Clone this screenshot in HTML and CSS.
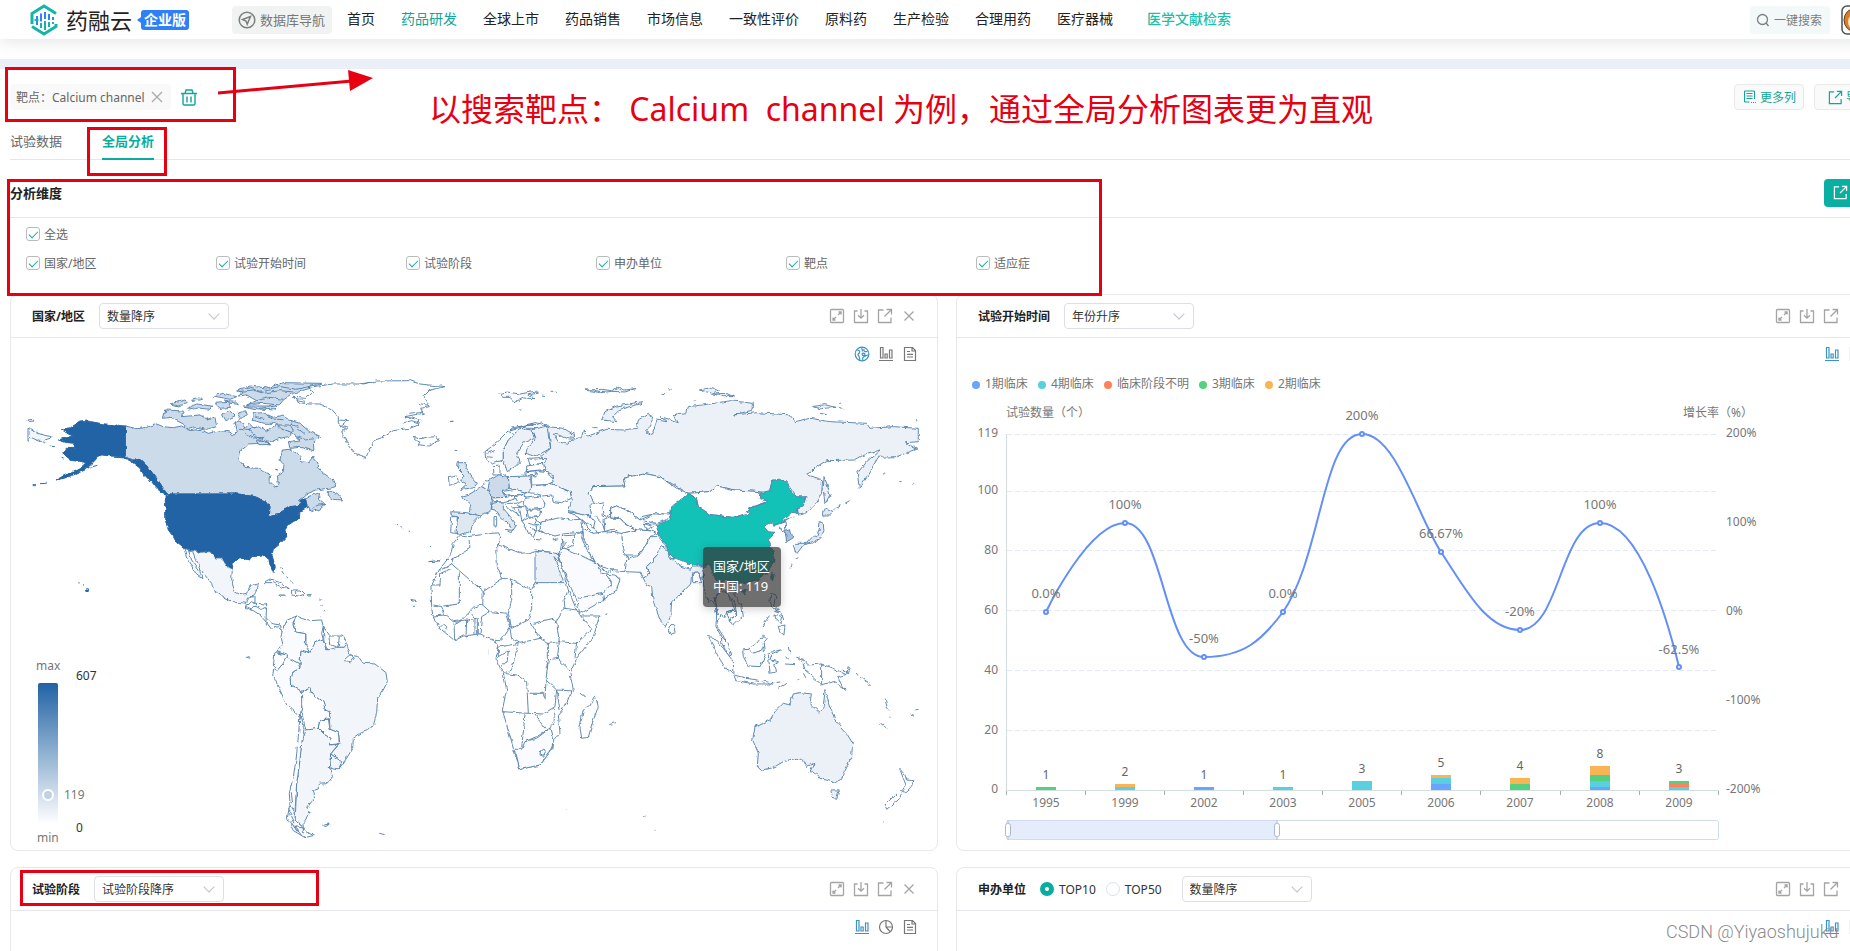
FILE: index.html
```html
<!DOCTYPE html>
<html lang="zh-CN">
<head>
    <meta charset="UTF-8">
    <meta name="viewport" content="width=device-width, initial-scale=1.0">
    <title>药融云 - 全局分析</title>
    <link rel="stylesheet" href="styles.css">
</head>
<body>
    <!-- icon set -->
    <svg class="sprite" aria-hidden="true">
        <symbol id="i-full" viewBox="0 0 16 16"><rect x="1.5" y="1.5" width="13" height="13" rx="1"/><path d="M9.5 4h2.6v2.6M12 4 9 7M4 9.500v2.500h2.500M4 12l3-3"/></symbol>
        <symbol id="i-down" viewBox="0 0 16 16"><path d="M4.500 3H1.500v11.500h13V3h-3M8 1v9M5 7.200l3 3 3-3"/></symbol>
        <symbol id="i-share" viewBox="0 0 16 16"><path d="M6.500 2h-5v12.500h12.500v-5M9.500 1.500h5v5M14.300 1.700 7.500 8.500"/></symbol>
        <symbol id="i-close" viewBox="0 0 16 16"><path d="m3.500 3.500 9 9M12.500 3.500l-9 9"/></symbol>
        <symbol id="i-bar" viewBox="0 0 16 16"><path d="M1 14.500h14M2.500 1.500h2.500V12H2.500zM7 8h2.200v4H7zM11.500 4H14v8h-2.500z"/></symbol>
        <symbol id="i-doc" viewBox="0 0 16 16"><path d="M2.500 1.500h8l3 3v10h-11zM10 1.500v3.500h3.500M5 5.500h3M5 8.300h6M5 11h6"/></symbol>
        <symbol id="i-globe" viewBox="0 0 16 16"><circle cx="8" cy="8" r="6.800"/><path d="M3 4c2 0 3 1 2.500 2.500S3 8 4.500 9.500 5 12 6 14M8 1.500C7 3 9.500 4 8 5.500M9 14c-1-2 0-3 1.500-3.500S12 9 14.500 9M10 3c-1 2 1 3 3.500 2.500M8 8c1-1.500 3-1 3 .5S8.500 10 8 8z"/></symbol>
        <symbol id="i-pie" viewBox="0 0 16 16"><circle cx="8" cy="8" r="6.500"/><path d="M8 1.500V8h6.500M8 8l4 4.500"/></symbol>
    </svg>

    <div class="page">
        <header class="topbar">
            <a class="logo" href="#">
                <svg width="28" height="32" viewBox="0 0 28 32" fill="none">
                    <path d="M2 20V9.500L14 2l12 7.500M2 22.500 14 30l12-7.500V20" stroke="#12b5a6" stroke-width="3"/>
                    <path d="M7 12v9M11 9.500v8M15 8v7M19 10v6M23 13v3" stroke="#2e86f5" stroke-width="2"/>
                    <path d="M4.500 16h4M11 19v5M15 17v9M19 18v5M23 18v2" stroke="#12b5a6" stroke-width="2"/>
                </svg>
                <span class="logo-name">药融云</span>
                <span class="logo-badge">企业版</span>
            </a>
            <button class="db-nav" type="button">
                <svg width="18" height="18" viewBox="0 0 18 18" fill="none" stroke="#7b7f7e" stroke-width="1.500"><circle cx="9" cy="9" r="7.800"/><path d="m12.500 5.500-8 3 3.500 1.500 1.200 3.300z"/></svg>
                数据库导航
            </button>
            <nav class="menu">
                <a href="#">首页</a>
                <a href="#" class="on">药品研发</a>
                <a href="#">全球上市</a>
                <a href="#">药品销售</a>
                <a href="#">市场信息</a>
                <a href="#">一致性评价</a>
                <a href="#">原料药</a>
                <a href="#">生产检验</a>
                <a href="#">合理用药</a>
                <a href="#">医疗器械</a>
                <a href="#" class="lit">医学文献检索</a>
            </nav>
            <button class="quick" type="button">
                <svg width="14" height="14" viewBox="0 0 14 14" fill="none" stroke="#7b7f7e" stroke-width="1.300"><circle cx="6.500" cy="6.500" r="5"/><path d="m10 10 2.500 3"/></svg>
                一键搜索
            </button>
            <a class="avatar" href="#" aria-label="account">
                <svg width="30" height="30" viewBox="0 0 30 30"><rect x="1" y="1" width="28" height="28" rx="5" fill="#fff" stroke="#4b5152" stroke-width="1.500"/><circle cx="15" cy="15" r="12" fill="#d97f28" stroke="#6d3d1a"/><circle cx="16" cy="17" r="9" fill="#f7e4c8"/></svg>
            </a>
        </header>

        <div class="band"></div>

        <main class="content">
            <div class="toolbar">
                <span class="tag">靶点：Calcium channel
                    <button type="button" aria-label="remove"><svg width="12" height="12" viewBox="0 0 12 12" fill="none" stroke="#aaa" stroke-width="1.300"><path d="m1 1 10 10M11 1 1 11"/></svg></button>
                </span>
                <button class="trash" type="button" aria-label="clear">
                    <svg width="16" height="17" viewBox="0 0 16 17" fill="none" stroke="#12a598" stroke-width="1.400"><path d="M0 4.500h16M4 4.500 5 1h6l1 3.500M2 4.500V15l1 1h10l1-1V4.500M6 7.500v6M10 7.500v6"/></svg>
                </button>
                <span class="space"></span>
                <button class="btn" type="button">
                    <svg width="13" height="14" viewBox="0 0 13 14" fill="none" stroke="#12a598"><path d="M11.500 9V1h-10v11h5M3.500 3.500h6M3.500 6h6M3.500 8.500h6M8 12.500h1M10 12.500h1M12 12.500h1"/></svg>
                    更多列
                </button>
                <button class="btn export" type="button">
                    <svg class="ico" width="15" height="15"><use href="#i-share"/></svg>
                    导出
                </button>
            </div>

            <div class="tabs">
                <a href="#">试验数据</a>
                <a href="#" class="active">全局分析</a>
            </div>

            <div class="dim-head">
                <h2>分析维度</h2>
                <button type="button" aria-label="导出"><svg class="ico" width="15" height="15"><use href="#i-share"/></svg></button>
            </div>
            <div class="dims">
                <div class="dim-row"><label><input type="checkbox" checked>全选</label></div>
                <div class="dim-row">
                    <label><input type="checkbox" checked>国家/地区</label>
                    <label><input type="checkbox" checked>试验开始时间</label>
                    <label><input type="checkbox" checked>试验阶段</label>
                    <label><input type="checkbox" checked>申办单位</label>
                    <label><input type="checkbox" checked>靶点</label>
                    <label><input type="checkbox" checked>适应症</label>
                </div>
            </div>

            <div class="cards">
                <!-- map -->
                <section class="card">
                    <div class="card-head">
                        <h3>国家/地区</h3>
                        <span class="select"><select aria-label="国家/地区排序"><option>数量降序</option></select></span>
                        <div class="acts">
                            <button type="button" aria-label="fullscreen"><svg class="ico"><use href="#i-full"/></svg></button>
                            <button type="button" aria-label="download"><svg class="ico"><use href="#i-down"/></svg></button>
                            <button type="button" aria-label="share"><svg class="ico"><use href="#i-share"/></svg></button>
                            <button type="button" aria-label="close"><svg class="ico"><use href="#i-close"/></svg></button>
                        </div>
                    </div>
                    <div class="card-body">
                        <div class="views">
                            <button type="button" class="sel" aria-label="map"><svg class="ico"><use href="#i-globe"/></svg></button>
                            <button type="button" aria-label="bar"><svg class="ico"><use href="#i-bar"/></svg></button>
                            <button type="button" aria-label="table"><svg class="ico"><use href="#i-doc"/></svg></button>
                        </div>
                        <svg class="chart" viewBox="11 338 926 512">
                            <defs>
                                <linearGradient id="ramp" x1="0" y1="0" x2="0" y2="1"><stop offset="0" stop-color="#2163a4"/><stop offset="1" stop-color="#fff"/></linearGradient>
                                <filter id="coast" x="-5%" y="-5%" width="110%" height="110%" color-interpolation-filters="sRGB"><feTurbulence type="fractalNoise" baseFrequency="0.18" numOctaves="2" seed="4"/><feDisplacementMap in="SourceGraphic" scale="4" xChannelSelector="R" yChannelSelector="G"/></filter>
                            </defs>
                            <g class="land" filter="url(#coast)">
                                <!-- americas -->
                                <g transform="translate(0 360) scale(.3333)">
                                    <path class="c1" d="M376 198 410 206 440 202 470 192 490 200 520 203 545 198 570 212 600 208 625 220 660 212 690 216 700 225 712 212 705 190 720 180 735 205 750 190 770 210 760 225 775 240 800 240 812 255 780 250 745 252 722 270 717 300 735 322 775 325 790 335 812 345 810 365 828 382 835 372 832 345 850 335 852 315 840 300 848 270 870 268 890 280 900 290 903 305 925 308 940 290 950 312 968 338 1000 360 1008 380 985 385 950 390 920 402 895 422 930 408 960 398 955 415 975 432 948 450 930 452 922 440 917 418 903 420 895 437 870 440 850 452 830 464 808 470 810 440 800 425 765 410 715 402 510 402 490 385 475 362 458 340 440 318 420 298 400 300 376 289z"/>
                                    <path class="c1" d="M710 90 750 78 800 84 850 68 965 70 930 85 880 100 850 120 838 135 790 130 740 135 770 122 740 105 715 108 730 98zM730 138h100l-5 12-60-4zM490 175 497 150 550 153 545 170 600 165 625 180 645 172 650 200 620 208 590 202 565 208 550 192 510 172zM757 180 760 160 790 158 820 172 850 165 865 180 900 190 925 212 962 230 940 245 942 272 900 262 870 265 865 245 900 240 870 215 840 205 825 190 790 190zM510 132l45-12 10 10-30 8zM560 145l30-13 45 6-5 10-35-4-30 6zM640 108l30-8 40 10-20 8zM575 118l25-8 8 8-25 6zM645 130l40-3 10 15-35 3zM670 120l35 4 10 10-30-6zM665 165l25-12 15 15-30 14zM712 160l25-8 5 12-20 12zM745 208l30-8 25 15 30-20 40 0 10 15-15 20-25 5-30 10-35-12zM770 240l25 2 15 12-30 0zM985 392 1012 400 1028 420 1000 418 985 410zM928 450l20-12 25-6-15 15-20 8z"/>
                                    <path class="line" d="M715 95 760 90 790 100 840 92 880 96M740 82l40 12 60-14 50 8 60-14M770 122l40-10 40 6M780 145l40-6M765 168l25 8M800 165l20 12 30 2M870 188l20 12 25 20M890 230l30 10 20-4M720 205l30 4 20-8M735 222l25 12 30-2M700 195l15-10"/>
                                    <path class="us" d="M376 198 340 194 300 190 262 183 240 186 222 196 208 206 184 211 208 222 222 228 200 232 175 240 200 248 222 250 224 262 205 263 188 278 200 290 215 302 240 304 258 308 240 325 215 338 190 348 168 360 195 354 225 343 255 330 275 312 290 295 305 285 330 288 376 291 400 302 420 298 440 318 458 340 475 362 490 385 506 402 495 406 470 385 455 365 435 350 420 325 395 305 376 295z"/>
                                    <path class="us" d="M510 402H715L765 410 800 425 810 440 808 470 830 464 850 452 870 440 895 437 903 420 917 418 922 442 900 455 898 475 880 485 865 495 855 510 860 530 840 552 820 568 816 585 826 620 822 638 812 625 806 595 790 588 755 590 750 600 720 593 700 605 697 628 683 622 670 597 650 597 630 575 600 577 552 566 530 548 520 530 505 510 497 485 497 440 495 410zM260 686l9 2-2 8-7-2zM246 674l6 4M235 667l4 2M145 257l22 4M185 292l6 2M98 374l10 0M120 371l20-1M272 322l20-6M438 352l12 14M826 328l8 2"/>
                                    <path class="c3" d="M552 566 600 577 630 575 650 597 670 597 683 622 697 628 695 660 705 695 720 704 740 700 750 678 775 672 772 690 760 708 745 712 740 730 725 728 700 728 670 712 640 690 635 670 610 640 590 605 578 575 566 572 575 600 600 635 606 656 590 645 575 618 563 600z"/>
                                    <path class="c3" d="M84 205 120 222 158 232 135 240 138 250 110 240 92 232 84 242zM84 180l14-2 4 5-16 2z"/>
                                    <path class="line" d="M740 730 736 742 760 752 780 765 800 788 815 808 835 800 848 808M745 712 765 710V730L800 732 798 785M755 748 765 738 785 748 800 740M736 742 755 725 765 730M800 775 815 790 840 795 846 805"/>
                                    <path d="M790 668 810 657 840 668 868 686 845 682 820 668zM875 690 900 690 912 702 895 708 875 705zM890 690v18M840 705l12 0 0 4-10 0zM922 704l12 0 0 4-10 0zM838 620l10 4M845 632l6 10M856 650l8 6M868 662l12 8M962 716l2 4M966 735l2 6M970 755l8 0M962 770l4 4M740 888l14 4M1190 495l4 2M1204 503l6 2M1226 510l6 2M1232 718l18 4M1236 736l8 0M1285 605l32-2M1290 560l4 2"/>
                                    <path class="c4" d="M848 808 862 780 890 768 878 790 885 815 918 822 916 850 930 878 903 872 900 912 870 902 860 885 830 875 848 850 843 830z"/>
                                    <path d="M890 768 910 776 930 782 965 780 970 800 965 820 970 840 945 848 942 870 930 878 918 860 918 822 885 815 880 790z"/>
                                    <path d="M970 800 990 828 1030 828 1042 850 1030 862 1010 862 985 872 972 845zM990 828 992 855 1010 862M1018 830 1015 860"/>
                                    <path class="c3" d="M903 870 930 878 945 848 970 840 980 870 1010 862 1030 862 1040 848 1050 885 1075 890 1090 910 1125 912 1158 938 1162 965 1150 990 1133 1015 1130 1060 1122 1090 1108 1110 1085 1118 1060 1135 1058 1165 1040 1195 1020 1222 1018 1200 992 1182 1020 1150 1015 1118 990 1108 988 1070 975 1050 970 1025 935 1000 930 983 905 995 875 975 873 955 880 935 900 925z"/>
                                    <path d="M825 878 860 885 855 905 832 932 820 918zM1032 900l16-14 12 8-8 12-16-4z"/>
                                    <path class="c4" d="M860 890 895 910 900 925 880 935 873 955 875 975 905 995 908 1030 900 1068 860 1035 840 990 818 945 822 925 832 932 850 910z"/>
                                    <path d="M905 995 930 983 935 1000 970 1025 975 1050 988 1055 990 1078 960 1080 955 1105 918 1112 908 1070 905 1030zM955 1105 960 1080 985 1076 990 1108 1015 1118 1018 1150 990 1155 993 1135 975 1125z"/>
                                    <path class="c3" d="M918 1110 955 1105 975 1125 993 1135 990 1155 1015 1153 992 1182 988 1225 998 1250 985 1268 955 1270 955 1290 940 1295 945 1310 935 1325 920 1345 930 1360 915 1385 905 1395 885 1380 888 1330 890 1270 900 1200 905 1150zM992 1182 1025 1205 1015 1230 990 1225z"/>
                                    <path class="c4" d="M900 1066 912 1108 905 1150 900 1200 890 1270 886 1340 885 1380 905 1395 912 1410 940 1427 915 1433 880 1412 862 1375 870 1330 868 1300 880 1250 888 1200 895 1130zM868 1360l14 30M870 1330l12 24M872 1385l20 30M880 1395l24 30M910 1395v25M866 1345l10 20M874 1300l4 30M885 1400l30 5M968 1396l20-4-10 8zM1138 1420l16 4"/>
                                    <path d="M880 112 920 115 940 95 925 82 1000 72 1090 72 1130 63 1230 62 1260 72 1335 80 1290 90 1270 110 1288 140 1262 145 1270 160 1240 165 1215 170 1260 180 1255 195 1230 205 1180 212 1150 232 1125 240 1110 265 1098 292 1065 280 1040 245 1025 215 1035 205 1015 190 1015 170 995 148 960 132 930 132 900 128z"/>
                                    <path class="line" d="M1080 72l40-6M1015 180l28 2-20 14 20 6-16 14M1205 190l30-8 20 6M1228 160l40-6M1255 130l30 6M925 82l15 14M885 118l30 6"/>
                                    <path d="M1242 240 1238 232 1262 236 1280 232 1310 230 1318 242 1285 258 1255 254 1260 246zM1350 185l10-1M1364 271l8 1M1408 290l2 4"/>
                                </g>
                                <!-- europe, africa, asia, oceania -->
                                <g transform="translate(420 360) scale(.3333)">
                                    <path class="c2" d="M385 200 430 205 465 225 450 238 415 225 400 222 415 245 440 252 455 238 485 232 490 210 505 228 560 208 610 210 650 205 655 180 685 160 700 180 680 215 695 225 712 180 740 185 720 170 775 188 760 165 780 160 800 158 805 140 870 132 930 122 1000 130 1000 150 940 165 1010 158 1110 165 1125 185 1170 175 1230 185 1340 190 1350 205 1420 200 1495 205V245L1460 248 1490 268 1430 290 1375 292 1340 350 1318 385 1312 340 1340 305 1380 270 1340 280 1305 300 1220 302 1190 320 1163 345 1195 355 1208 360 1205 400 1180 440 1150 462 1135 465 1133 445 1158 412 1130 410 1100 365 1060 360 1045 400 1020 395 945 390 890 378 870 395 805 400 720 350 670 340 610 355 615 378 520 380 505 400 525 425 510 440 515 468 485 465 445 450 458 415 450 395 395 372 400 345 365 330 370 300 362 290 392 265z"/>
                                    <path class="c2" d="M545 180 555 155 590 138 668 125 660 132 600 148 578 170 590 185zM1212 350 1222 375 1230 405 1215 432 1210 390zM838 90l30-6 30 8-20 8zM880 102l40-2 20 10-30 0zM1175 140l40-6 30 8-40 4zM1250 142l20 4M495 90l50-2 30 4 20-10 20 8 30-4-30 10-40-2-30 4zM365 105l12 2M392 94l16 0M725 100l10 1M745 86l10 2M300 150h4M92 184l8 0M1260 128l6 2M1488 182l6 2M820 122l4 2M1200 160l20 4M520 203l10 0"/>
                                    <path class="c4" d="M240 100 260 96 300 102 350 93 355 100 325 104 345 116 310 114 285 128 270 112 248 112z"/>
                                    <path d="M505 400 520 380 615 378 610 355 670 340 720 350 770 385 805 400 790 425 760 440 755 462 700 462 665 470 660 480 630 455 590 438 572 445V475L550 465 545 440 552 425 525 430z"/>
                                    <path d="M805 400 870 395 890 378 945 390 1020 395 1018 415 1045 425 1000 440 980 460 940 472 870 463 835 440 830 415z"/>
                                    <path d="M552 478 570 470 600 475 615 490 650 510 600 522 580 508 555 515zM572 475V445L590 438 630 455 660 480 700 462 755 462 740 480 705 492 670 490 680 512 650 510 615 490 600 475zM525 470 545 490 558 520 535 522 520 500 515 468M670 490l30 10-20 8 25 10M690 470l-20 12 40 8"/>
                                    <path class="c4" d="M360 515 362 488 385 480 420 473 450 480 485 478 490 515 430 522 405 528z"/>
                                    <path d="M445 455 515 470 525 485 520 505 500 490 485 478zM485 478 500 500 520 520M490 505 520 520 555 515 605 520 610 560 625 600 615 635 580 632 560 625 530 612 500 570 485 530zM427 528 465 525 490 515 490 535 505 565 525 605 490 590 430 565z"/>
                                    <path class="c4" d="M415 590 422 565 435 565 490 590 530 610 545 640 580 645 600 655 590 690 550 720 480 762 470 720 440 655z"/>
                                    <path class="line" d="M475 715 550 700 575 670 560 645M550 700 555 722M428 528 422 565M440 540 430 565M465 525 460 555 440 565M425 580 412 590M530 612 565 640 580 625"/>
                                    <path d="M605 520 650 510 690 512 710 520 690 530 680 555 655 585 615 585 608 550z"/>
                                    <path class="c4" d="M620 600 655 588 680 555 690 530 715 530 740 560 720 565 710 590 680 620 690 640 670 655 660 637 615 635z"/>
                                    <path class="c2" d="M725 560 742 575 755 597 812 618 848 618 855 635 845 660 830 635 815 640 812 672 780 705 755 725 752 770 735 802 720 780 700 725 695 680 680 675 670 655 690 640 680 620 710 590 715 570z"/>
                                    <path d="M755 597 765 590 818 612 812 628 780 618zM818 640 835 640 845 668 818 668zM752 792 762 800 766 820 755 825 748 810z"/>
                                    <path class="cn" d="M805 400 828 415 835 440 868 463 935 473 985 463 990 445 1045 425 1018 412 1022 398 1050 392 1055 362 1080 357 1100 368 1112 395 1133 412 1158 410 1150 438 1133 443 1132 462 1095 485 1062 497 1058 485 1033 502 1045 515 1067 517 1045 540 1060 575 1062 600 1045 635 1010 660 980 668 975 672 950 668 925 660 905 665 885 660 875 625 850 618 805 610 760 592 742 575 740 555 720 530 708 495 750 480 755 440 775 425zM1055 638 1063 640 1058 665 1050 655zM965 692 982 688 975 705z"/>
                                    <path d="M850 620 870 615 885 655 903 672 905 695 885 708 890 740 892 765 882 730 875 720 865 725 850 680zM905 695 925 700 935 725 945 750 920 755 915 775 900 760 892 800 910 830 925 850 915 850 888 800 890 765 885 708zM925 660 945 690 940 705 965 735 970 770 940 798 928 780 950 765 945 730 925 700 905 690M920 755 945 750 950 765 928 780z"/>
                                    <path class="c4" d="M905 830 925 850 935 885 922 880 905 850zM968 870 985 868 1010 850 1030 825 1042 835 1030 850 1035 890 1020 920 985 918 970 890zM985 868 1000 880 1025 870 1032 850"/>
                                    <path d="M865 830 880 832 910 865 940 905 942 942 920 930 895 890zM942 945 980 955 1040 965 1060 972 1000 972 950 962zM1045 880 1060 875 1085 870 1055 885 1050 900 1075 905 1060 912 1070 935 1050 940 1048 915zM1070 968l14-2M1075 985l26-18M1105 860l4 20M1100 890l6 8M1095 912l30 2M1130 962l8-4M1150 940l8 14"/>
                                    <path d="M1052 700 1068 705 1062 735 1075 750 1060 745 1050 725zM1075 800 1095 795 1092 825 1080 815zM1065 762l20 8-4 18-14-14zM1025 800l25-35M1085 760l6 20M1062 750l20 6"/>
                                    <path d="M1130 892 1150 898 1165 915 1205 912 1250 930 1280 945 1285 920 1290 925 1285 942 1255 950 1262 970 1275 988 1240 965 1205 975 1185 955 1155 930 1150 910zM1205 912V975M1305 940l10 6M1320 952l20 14M1340 962l12 18M1265 930l20 10M1395 1015l6 22M1400 1040l8 10M1380 1088l22 18M1472 1062l10 4M1485 1050l8-2M1410 1070v6"/>
                                    <path class="k" d="M1095 512 1112 506 1118 535 1100 545z"/>
                                    <path d="M1062 497 1095 485 1098 512 1085 515 1078 500M1085 485l30-25 20 4"/>
                                    <path class="c1" d="M1120 560 1130 550 1160 550 1180 528 1190 530 1198 510 1200 485 1210 490 1212 512 1202 535 1180 548 1150 555 1130 582zM1208 455 1215 442 1240 455 1225 468 1208 468z" fill-opacity=".6"/>
                                    <path class="line" d="M1242 448l20-14M1275 430l14-8M1110 625l8-16M1125 600l6-8M1438 364l8 2M1390 342l6 1M1476 372h4"/>
                                    <path class="c2" d="M1120 1002 1140 998 1175 1002 1170 1030 1200 1060 1210 1040 1215 992 1230 1035 1245 1080 1280 1120 1298 1150 1295 1190 1270 1240 1265 1258 1240 1268 1200 1255 1190 1240 1170 1235 1182 1210 1160 1220 1150 1200 1130 1195 1090 1205 1065 1220 1025 1232 1012 1220 1015 1180 998 1140 1005 1100 1050 1080 1065 1055 1090 1030 1110 1035zM1232 1290 1258 1290 1250 1315 1238 1312z"/>
                                    <path d="M1440 1228 1455 1245 1460 1260 1482 1262 1470 1285 1455 1298 1448 1290 1458 1275 1450 1255zM1440 1290 1450 1295 1435 1320 1400 1348 1395 1335 1420 1310zM1390 1386h4M668 1370l14 3M704 1410h4M438 1348h4M568 1094l20-6M555 762l6 1"/>
                                    <!-- europe -->
                                    <path class="c1" fill-opacity=".7" d="M115 308 140 308 138 325 150 345 172 370 160 384 122 388 140 372 122 362 132 345 112 325z"/>
                                    <path d="M85 350 110 345 115 368 88 376zM220 320 240 318 240 345 222 345zM247 340l8 6"/>
                                    <path class="c4" d="M195 275 240 240 275 205 345 188 385 195 375 210 335 205 300 205 265 240 250 270 250 300 215 312 198 300z"/>
                                    <path class="c2" d="M250 300 250 270 265 240 300 205 335 210 345 235 310 250 290 280 300 305 285 320 262 335zM335 210 380 198 392 265 345 290 318 280 322 262 345 240z"/>
                                    <path class="line" d="M270 210 340 192M290 200l70-8M200 280l25-8M198 290l20 2M265 215l20 6M360 185l20 14"/>
                                    <path d="M325 298 380 295 375 310 330 315zM320 318 370 310 375 328 320 335zM318 335 350 332 348 348 318 345zM335 350 350 332 385 335 400 365 380 375 335 375z"/>
                                    <path class="c4" d="M335 378 395 372 450 395 455 415 425 428 400 425 395 405 370 408 345 400 325 398zM315 415 360 408 375 430 372 445 325 448 310 430z"/>
                                    <path class="c1" d="M203 365 235 345 265 350 268 385 248 395 258 412 220 414 203 395z"/>
                                    <path class="c2" d="M265 350 330 348 335 385 320 398 268 385z"/>
                                    <path class="c1" fill-opacity=".75" d="M128 408 150 402 185 380 210 395 215 410 210 455 180 465 148 458 152 435 130 415z"/>
                                    <path class="c1" fill-opacity=".65" d="M92 455 140 458 182 468 160 490 150 515 118 525 108 520 112 470 95 468zM215 430 250 425 250 445 275 475 290 495 278 512 268 495 240 470 225 450 212 448zM255 510h20l-2 10z"/>
                                    <path d="M95 470 112 470 108 520 92 518zM185 378 200 360 208 368 203 392zM222 470h8v28h-8zM248 395 285 388 320 398 300 408 258 405zM220 414 258 412 285 405 285 418 250 425 215 425zM285 410 315 402 318 418 295 430zM255 430 290 430 300 440 275 440 298 468 270 450zM298 440 318 440 320 470 305 480zM322 450 362 450 358 470 325 472zM305 482 325 475 355 472 345 490 350 505 340 530 325 520 318 500zM325 490l30 8M330 505l40 10M345 478l20 14M345 538l20 2M398 540l12-4"/>
                                    <!-- africa -->
                                    <path d="M118 528 140 530 235 518 242 530 235 555 300 580 330 578 345 570 400 578 412 582 425 620 445 690 470 750 482 768 540 768 520 830 470 895 450 940 460 990 430 1045 415 1065 420 1120 400 1140 395 1170 360 1215 300 1228 285 1180 265 1110 247 1050 260 990 250 940 228 900 235 860 220 838 180 822 130 828 104 842 60 805 38 765 35 740 33 680 60 625 90 590 100 550z"/>
                                    <path class="c2" d="M345 572 400 578 412 582 418 608 402 590 432 668H345z"/>
                                    <path class="c4" d="M285 1168 305 1168 315 1145 350 1135 390 1105 400 1145 390 1175 360 1215 300 1228zM362 1175l10-8 6 10-8 12-10-4z"/>
                                    <path class="line" d="M147 540 150 565 95 600V612L65 628M95 612 190 695 248 655 232 620 230 555M248 655 275 660 335 690 345 668M35 675H60L62 640 95 625M118 640V732L70 738M190 695 188 735 165 740 150 755 120 785M335 690V745L325 780 275 805 265 760 275 720 275 660M180 822 185 770 210 755 260 760 272 800 245 840 225 838M270 805 275 835 300 850 360 835 330 785M340 790 400 775 410 790 418 845 385 850 360 835M405 790 435 745 470 750M445 690 432 720 435 745M418 845 470 850 515 808 482 768M470 850 465 895M385 850V900L378 960 410 990 405 1040 370 1062 325 1060 320 965 290 945 250 940M247 1055 325 1060M315 1065 305 1165M315 1145 350 1130 390 1105 403 1080 400 1045M385 900 412 895 450 930M418 845 412 895M410 990 460 993M235 862 295 850 275 930 250 940M235 862V890L268 870 265 900 245 920M40 735 65 740 75 765 40 768M75 765 100 785 140 780 170 775M140 780 138 830M165 775V822M172 775V822M104 842 102 790M60 805 68 790 80 800 75 815M345 1065 375 1105M325 1000 370 1000 375 1015 378 960M410 990 420 1050M375 900 382 915 378 925M120 785 105 790M188 735 210 755M150 755 165 775"/>
                                    <path d="M525 1005 535 1040 520 1080 505 1132 485 1135 480 1100 490 1050 510 1035zM480 1000l14 10M22 605l36-3M30 560l4 2M208 868v16"/>
                                </g>
                            </g>
                            <!-- visual map -->
                            <rect x="38" y="683" width="20" height="141" rx="2" fill="url(#ramp)"/>
                            <circle cx="48" cy="795" r="5" fill="#bfd1e4" stroke="#fff" stroke-width="2"/>
                            <g class="t12">
                                <text x="36" y="670">max</text>
                                <text x="37" y="842">min</text>
                                <text x="64" y="799">119</text>
                                <text class="dark" x="76" y="680">607</text>
                                <text class="dark" x="76" y="832">0</text>
                            </g>
                        </svg>
                        <div class="tip">国家/地区<br>中国: 119</div>
                    </div>
                </section>

                <!-- trend -->
                <section class="card">
                    <div class="card-head">
                        <h3>试验开始时间</h3>
                        <span class="select"><select aria-label="试验开始时间排序"><option>年份升序</option></select></span>
                        <div class="acts">
                            <button type="button" aria-label="fullscreen"><svg class="ico"><use href="#i-full"/></svg></button>
                            <button type="button" aria-label="download"><svg class="ico"><use href="#i-down"/></svg></button>
                            <button type="button" aria-label="share"><svg class="ico"><use href="#i-share"/></svg></button>
                            <button type="button" aria-label="close"><svg class="ico"><use href="#i-close"/></svg></button>
                        </div>
                    </div>
                    <div class="card-body">
                        <div class="views">
                            <button type="button" class="sel" aria-label="bar"><svg class="ico"><use href="#i-bar"/></svg></button>
                            <button type="button" aria-label="table"><svg class="ico"><use href="#i-doc"/></svg></button>
                        </div>
                        <svg class="chart" viewBox="957 338 926 512">
                            <g class="t12">
                                <circle class="b1" cx="976" cy="385" r="4"/><text x="985" y="388">1期临床</text>
                                <circle class="b4" cx="1042" cy="385" r="4"/><text x="1051" y="388">4期临床</text>
                                <circle class="b0" cx="1108" cy="385" r="4"/><text x="1117" y="388">临床阶段不明</text>
                                <circle class="b3" cx="1203" cy="385" r="4"/><text x="1212" y="388">3期临床</text>
                                <circle class="b2" cx="1269" cy="385" r="4"/><text x="1278" y="388">2期临床</text>
                                <text x="1006" y="417">试验数量（个）</text>
                                <text x="1683" y="417">增长率（%）</text>
                            </g>
                            <path class="grid" d="M1007 434.500H1719M1007 491.500H1719M1007 550.500H1719M1007 610.500H1719M1007 670.500H1719M1007 730.500H1719"/>
                            <path class="axis" d="M1006.500 434V790.500H1719"/>
                            <path class="tick" d="M1006.500 791v4M1085.500 791v4M1164.500 791v4M1243.500 791v4M1322.500 791v4M1401.500 791v4M1480.500 791v4M1560.500 791v4M1639.500 791v4M1718.500 791v4"/>
                            <g class="t12 end">
                                <text x="998" y="437">119</text><text x="998" y="494">100</text><text x="998" y="554">80</text><text x="998" y="614">60</text><text x="998" y="674">40</text><text x="998" y="734">20</text><text x="998" y="793">0</text>
                            </g>
                            <g class="t12">
                                <text x="1726" y="437">200%</text><text x="1726" y="526">100%</text><text x="1726" y="615">0%</text><text x="1726" y="704">-100%</text><text x="1726" y="793">-200%</text>
                            </g>
                            <g class="t12 mid">
                                <text x="1046" y="807">1995</text><text x="1125" y="807">1999</text><text x="1204" y="807">2002</text><text x="1283" y="807">2003</text><text x="1362" y="807">2005</text><text x="1441" y="807">2006</text><text x="1520" y="807">2007</text><text x="1600" y="807">2008</text><text x="1679" y="807">2009</text>
                            </g>
                            <!-- stacked bars, 3px per trial -->
                            <rect class="b3" x="1036" y="787" width="20" height="3"/>
                            <rect class="b4" x="1115" y="787" width="20" height="3"/><rect class="b2" x="1115" y="784" width="20" height="3"/>
                            <rect class="b1" x="1194" y="787" width="20" height="3"/>
                            <rect class="b4" x="1273" y="787" width="20" height="3"/>
                            <rect class="b4" x="1352" y="781" width="20" height="9"/>
                            <rect class="b1" x="1431" y="784" width="20" height="6"/><rect class="b4" x="1431" y="778" width="20" height="6"/><rect class="b2" x="1431" y="775" width="20" height="3"/>
                            <rect class="b3" x="1510" y="784" width="20" height="6"/><rect class="b2" x="1510" y="778" width="20" height="6"/>
                            <rect class="b1" x="1590" y="787" width="20" height="3"/><rect class="b4" x="1590" y="781" width="20" height="6"/><rect class="b3" x="1590" y="775" width="20" height="6"/><rect class="b2" x="1590" y="766" width="20" height="9"/>
                            <rect class="b4" x="1669" y="787" width="20" height="3"/><rect class="b0" x="1669" y="784" width="20" height="3"/><rect class="b3" x="1669" y="781" width="20" height="3"/>
                            <g class="t12 mid dim">
                                <text x="1046" y="779">1</text><text x="1125" y="776">2</text><text x="1204" y="779">1</text><text x="1283" y="779">1</text><text x="1362" y="773">3</text><text x="1441" y="767">5</text><text x="1520" y="770">4</text><text x="1600" y="758">8</text><text x="1679" y="773">3</text>
                            </g>
                            <path class="rate" d="M1046 612C1046 612 1088 523 1125 523C1164 523 1164 657 1204 657C1244 657 1262 640 1283 612C1322 556 1322 434 1362 434C1396 434 1417 515 1441 552C1465 588 1486 630 1520 630C1560 630 1560 523 1600 523C1640 523 1668 622 1679 667"/>
                            <g class="dots">
                                <circle cx="1046" cy="612" r="2"/><circle cx="1125" cy="523" r="2"/><circle cx="1204" cy="657" r="2"/><circle cx="1283" cy="612" r="2"/><circle cx="1362" cy="434" r="2"/><circle cx="1441" cy="552" r="2"/><circle cx="1520" cy="630" r="2"/><circle cx="1600" cy="523" r="2"/><circle cx="1679" cy="667" r="2"/>
                            </g>
                            <g class="t13 mid">
                                <text x="1046" y="598">0.0%</text><text x="1125" y="509">100%</text><text x="1204" y="643">-50%</text><text x="1283" y="598">0.0%</text><text x="1362" y="420">200%</text><text x="1441" y="538">66.67%</text><text x="1520" y="616">-20%</text><text x="1600" y="509">100%</text><text x="1679" y="654">-62.5%</text>
                            </g>
                            <!-- zoom slider -->
                            <rect x="1006.500" y="820.500" width="712" height="19" rx="2" fill="none" stroke="#d2dbee"/>
                            <rect x="1008" y="821" width="269" height="18" fill="#e5ecfc"/>
                            <path d="M1008 820v20M1277 820v20" stroke="#acb8d1" fill="none"/>
                            <rect x="1005.500" y="823.500" width="5" height="13" rx="2" fill="#fff" stroke="#acb8d1"/>
                            <rect x="1274.500" y="823.500" width="5" height="13" rx="2" fill="#fff" stroke="#acb8d1"/>
                        </svg>
                    </div>
                </section>

                <section class="card">
                    <div class="card-head">
                        <h3>试验阶段</h3>
                        <span class="select"><select aria-label="试验阶段排序"><option>试验阶段降序</option></select></span>
                        <div class="acts">
                            <button type="button" aria-label="fullscreen"><svg class="ico"><use href="#i-full"/></svg></button>
                            <button type="button" aria-label="download"><svg class="ico"><use href="#i-down"/></svg></button>
                            <button type="button" aria-label="share"><svg class="ico"><use href="#i-share"/></svg></button>
                            <button type="button" aria-label="close"><svg class="ico"><use href="#i-close"/></svg></button>
                        </div>
                    </div>
                    <div class="card-body tall">
                        <div class="views">
                            <button type="button" class="sel" aria-label="bar"><svg class="ico"><use href="#i-bar"/></svg></button>
                            <button type="button" aria-label="pie"><svg class="ico"><use href="#i-pie"/></svg></button>
                            <button type="button" aria-label="table"><svg class="ico"><use href="#i-doc"/></svg></button>
                        </div>
                    </div>
                </section>

                <section class="card">
                    <div class="card-head">
                        <h3>申办单位</h3>
                        <div class="radios">
                            <label><input type="radio" name="top" checked>TOP10</label>
                            <label><input type="radio" name="top">TOP50</label>
                        </div>
                        <span class="select"><select aria-label="申办单位排序"><option>数量降序</option></select></span>
                        <div class="acts">
                            <button type="button" aria-label="fullscreen"><svg class="ico"><use href="#i-full"/></svg></button>
                            <button type="button" aria-label="download"><svg class="ico"><use href="#i-down"/></svg></button>
                            <button type="button" aria-label="share"><svg class="ico"><use href="#i-share"/></svg></button>
                            <button type="button" aria-label="close"><svg class="ico"><use href="#i-close"/></svg></button>
                        </div>
                    </div>
                    <div class="card-body tall">
                        <div class="views">
                            <button type="button" class="sel" aria-label="bar"><svg class="ico"><use href="#i-bar"/></svg></button>
                            <button type="button" aria-label="table"><svg class="ico"><use href="#i-doc"/></svg></button>
                        </div>
                    </div>
                </section>
            </div>
        </main>

        <!-- red notes -->
        <div class="mark mark-tag"></div>
        <div class="mark mark-tab"></div>
        <div class="mark mark-dims"></div>
        <div class="mark mark-phase"></div>
        <svg class="arrow" width="156" height="26" viewBox="0 0 156 26"><path d="M0 24 134 12" stroke="#e60012" stroke-width="3"/><path d="m130 1 25 8-23 13z" fill="#e60012"/></svg>
        <p class="note">以搜索靶点：&nbsp;Calcium&nbsp; channel 为例，通过全局分析图表更为直观</p>
        <div class="watermark">CSDN @Yiyaoshujuku</div>
    </div>
</body>
</html>
```
FILE: styles.css
```css
* {
    box-sizing: border-box;
}

body {
    margin: 0;
    background: #fff;
    color: #666;
    font-family: "Noto Sans", "Noto Sans CJK SC", sans-serif;
    font-size: 12px;
    overflow: hidden;
}

a {
    color: inherit;
    text-decoration: none;
}

h2, h3, p {
    margin: 0;
}

button {
    display: flex;
    align-items: center;
    padding: 0;
    border: none;
    background: none;
    color: inherit;
    font: inherit;
    white-space: nowrap;
    cursor: pointer;
}

.sprite {
    display: none;
}

.ico {
    fill: none;
    stroke: currentColor;
    stroke-width: 1.3;
}

.page {
    position: relative;
    min-width: 1894px;
    height: 100vh;
    overflow: hidden;
}

/* top bar */
.topbar {
    display: flex;
    align-items: center;
    height: 39px;
    padding: 0 23px 0 30px;
    box-shadow: 0 2px 16px rgba(40, 60, 50, 0.14);
}

.logo {
    display: flex;
    align-items: center;
    width: 202px;
}

.logo-name {
    margin-left: 8px;
    color: #222;
    font-size: 22px;
    line-height: 30px;
}

.logo-badge {
    position: relative;
    margin-left: 9px;
    padding: 0 3px;
    border-radius: 3px;
    background: #2f7ff8;
    color: #fff;
    font-size: 14px;
    font-weight: bold;
    line-height: 20px;
}

.logo-badge::before {
    content: "";
    position: absolute;
    left: -4px;
    top: 7px;
    border: 3px solid transparent;
    border-left: none;
    border-right: 4px solid #2f7ff8;
}

.db-nav {
    gap: 4px;
    width: 100px;
    height: 28px;
    padding-left: 6px;
    border-radius: 4px;
    background: #f1f3f2;
    color: #777;
    font-size: 13px;
}

.menu {
    display: flex;
    flex: 1;
    gap: 26px;
    margin-left: 15px;
    padding-bottom: 2px;
    color: #222;
    font-size: 14px;
    line-height: 36px;
}

.menu .on {
    color: #12a598;
}

.menu .lit {
    margin-left: 8px;
    color: #1fc0a8;
    font-weight: 500;
}

.quick {
    gap: 4px;
    width: 80px;
    height: 28px;
    padding-left: 6px;
    border-radius: 4px;
    background: #f3f9f9;
    color: #7b7f7e;
}

.avatar {
    display: flex;
    margin-left: 11px;
}

.band {
    height: 10px;
    margin-top: 20px;
    background: #ebeff8;
}

.content {
    padding: 15px 10px 0;
}

/* search condition */
.toolbar {
    display: flex;
    align-items: center;
    height: 26px;
}

.tag {
    display: flex;
    align-items: center;
    gap: 6px;
    width: 161px;
    height: 26px;
    padding-left: 6px;
    border-radius: 4px;
    background: #f9f9f9;
    white-space: nowrap;
}

.trash {
    margin-left: 10px;
}

.space {
    flex: 1;
}

.btn {
    gap: 4px;
    width: 70px;
    height: 26px;
    padding-left: 8px;
    border: 1px solid #e9e9e9;
    border-radius: 4px;
    background: #fafafa;
    color: #12a598;
}

.export {
    gap: 3px;
    margin-left: 10px;
    padding-left: 13px;
}

.tabs {
    display: flex;
    gap: 40px;
    height: 50px;
    border-bottom: 1px solid #e6e6e6;
    font-size: 13px;
    line-height: 20px;
}

.tabs a {
    height: 50px;
    padding-top: 21px;
}

.tabs .active {
    border-bottom: 2px solid #09ac9e;
    color: #09ac9e;
    font-weight: bold;
}

.dim-head {
    display: flex;
    align-items: center;
    justify-content: space-between;
    height: 58px;
    padding-top: 8px;
    border-bottom: 1px solid #dfe9e7;
}

.dim-head h2 {
    color: #222;
    font-size: 13px;
}

.dim-head button {
    width: 60px;
    height: 28px;
    padding-left: 9px;
    border-radius: 4px;
    background: #09b0a1;
    color: #fff;
}

.dims {
    display: flex;
    flex-direction: column;
    gap: 15px;
    padding: 9px 16px 24px;
}

.dim-row {
    display: flex;
}

.dim-row label {
    display: flex;
    align-items: center;
    gap: 4px;
    width: 190px;
    height: 14px;
}

input {
    appearance: none;
    position: relative;
    flex: none;
    width: 14px;
    height: 14px;
    margin: 0;
    border: 1px solid #bbb;
    border-radius: 3px;
    background: #fff;
}

input[type="checkbox"]:checked::after {
    content: "";
    position: absolute;
    left: 4px;
    top: 1px;
    width: 4px;
    height: 8px;
    border: solid #12b0a2;
    border-width: 0 1px 1px 0;
    transform: rotate(45deg);
}

input[type="radio"] {
    border-color: #dcdfe6;
    border-radius: 50%;
}

input[type="radio"]:checked {
    border: 5px solid #09ac9e;
}

/* cards */
.cards {
    display: grid;
    grid-template-columns: 1fr 1fr;
    gap: 16px 18px;
}

.card {
    border: 1px solid #e8e8ee;
    border-radius: 8px;
    background: #fff;
}

.card-head {
    display: flex;
    align-items: center;
    height: 43px;
    padding: 0 20px 0 21px;
    border-bottom: 1px solid #e6e6ea;
}

.card-head h3 {
    color: #222;
    font-size: 12px;
}

.select {
    position: relative;
    margin-left: 14px;
}

.select select {
    appearance: none;
    display: block;
    width: 130px;
    height: 26px;
    padding: 0 7px;
    border: 1px solid #dcdfe6;
    border-radius: 4px;
    background: #fff;
    color: #333;
    font: inherit;
}

.select::after {
    content: "";
    position: absolute;
    right: 11px;
    top: 7px;
    width: 7px;
    height: 7px;
    border: solid #c0c4cc;
    border-width: 0 1px 1px 0;
    transform: rotate(45deg);
}

.radios {
    display: flex;
    gap: 10px;
    margin: 0 6px 0 14px;
    color: #333;
}

.radios label {
    display: flex;
    align-items: center;
    gap: 5px;
}

.acts {
    display: flex;
    gap: 8px;
    margin-left: auto;
    color: #a4a4a4;
}

.acts .ico, .views .ico {
    display: block;
    width: 16px;
    height: 16px;
}

.views .ico {
    stroke-width: 1.2;
}

.card-body {
    position: relative;
}

.tall {
    height: 512px;
}

.views {
    position: absolute;
    top: 8px;
    right: 19px;
    display: flex;
    gap: 8px;
    color: #777;
}

.views .sel {
    color: #3b93c4;
}

.chart {
    display: block;
    width: 100%;
}

.land {
    fill: #fff;
    stroke: #5581ae;
    stroke-width: 2.8;
    stroke-linejoin: round;
}

.land .line { fill: none; }
.land .us { fill: #2163a4; stroke: #2163a4; }
.land .c1 { fill: #cbdbea; }
.land .c2 { fill: #ecf1f8; }
.land .c3 { fill: #f2f6fa; }
.land .c4 { fill: #f9fbfe; }
.land .k { fill: #a7c2dd; }
.land .cn { fill: #12c2b6; }

.t12, .t13 {
    fill: #777;
    font-size: 12px;
}

.t13 { font-size: 13px; }
.t12 .dark { fill: #333; }
.mid { text-anchor: middle; }
.end { text-anchor: end; }
.dim { fill: #666; }

.grid {
    fill: none;
    stroke: #e1e7f3;
    stroke-dasharray: 5 3;
}

.axis {
    fill: none;
    stroke: #d3dfdf;
}

.tick {
    stroke: #aaa;
}

.b1 { fill: #6ba4fd; }
.b4 { fill: #58d0df; }
.b0 { fill: #fd8259; }
.b3 { fill: #55d080; }
.b2 { fill: #f9b555; }

.rate {
    fill: none;
    stroke: #638ff7;
    stroke-width: 2;
}

.dots {
    fill: #fff;
    stroke: #638ff7;
    stroke-width: 2;
}

.tip {
    position: absolute;
    left: 692px;
    top: 209px;
    width: 78px;
    height: 60px;
    padding: 9px 10px;
    border-radius: 4px;
    background: rgba(50, 50, 50, 0.7);
    box-shadow: 0 2px 10px rgba(0, 0, 0, 0.2);
    color: #fff;
    font-size: 13px;
    line-height: 20px;
    white-space: nowrap;
}

/* annotations */
.mark {
    position: absolute;
    border: 3px solid #e60012;
}

.mark-tag {
    left: 5px;
    top: 67px;
    width: 231px;
    height: 55px;
}

.mark-tab {
    left: 87px;
    top: 127px;
    width: 80px;
    height: 49px;
}

.mark-dims {
    left: 7px;
    top: 179px;
    width: 1095px;
    height: 117px;
}

.mark-phase {
    left: 20px;
    top: 870px;
    width: 299px;
    height: 36px;
}

.arrow {
    position: absolute;
    left: 218px;
    top: 69px;
}

.note {
    position: absolute;
    left: 429px;
    top: 88px;
    color: #e60012;
    font-size: 32px;
    line-height: 42px;
    white-space: nowrap;
}

.watermark {
    position: absolute;
    left: 1666px;
    top: 920px;
    color: #8c8c8c;
    font-family: Roboto, sans-serif;
    font-size: 18px;
    font-weight: 300;
    line-height: 24px;
}
```
